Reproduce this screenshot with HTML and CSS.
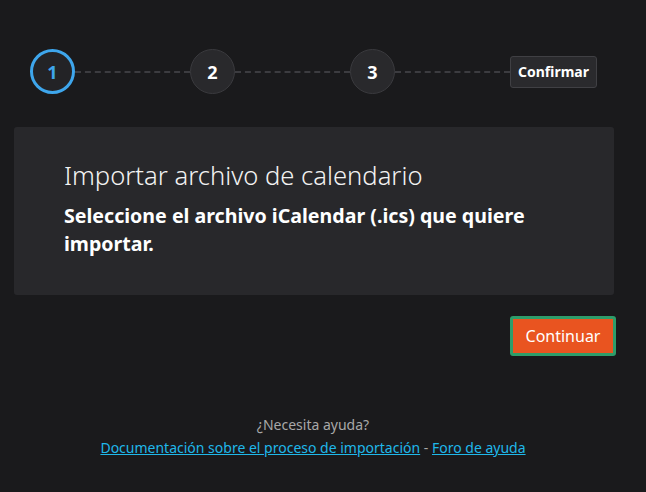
FILE: index.html
```html
<!DOCTYPE html>
<html lang="es">
<head>
<meta charset="utf-8">
<title>Importar calendario</title>
<link rel="stylesheet" href="styles.css">
</head>
<body>
<div class="page">
  <div class="stepper">
    <div class="step step-active">1</div>
    <div class="connector"></div>
    <div class="step">2</div>
    <div class="connector"></div>
    <div class="step">3</div>
    <div class="connector"></div>
    <div class="step-final">Confirmar</div>
  </div>

  <section class="card">
    <h1 class="card-title">Importar archivo de calendario</h1>
    <p class="card-text">Seleccione el archivo iCalendar (.ics) que quiere importar.</p>
  </section>

  <div class="actions">
    <button class="btn-primary" type="button">Continuar</button>
  </div>

  <footer class="help">
    <div class="help-q">¿Necesita ayuda?</div>
    <div class="help-links"><a href="#">Documentación sobre el proceso de importación</a> - <a href="#">Foro de ayuda</a></div>
  </footer>
</div>
</body>
</html>
```

FILE: styles.css
```css
html, body {
  margin: 0;
  padding: 0;
  background: #1a1a1c;
  color: #ffffff;
  font-family: "Noto Sans", "Open Sans", sans-serif;
}

.page {
  width: 646px;
  height: 492px;
  overflow: hidden;
}

.stepper {
  display: flex;
  align-items: center;
  width: 567px;
  margin: 49px 0 0 30px;
  height: 45px;
}

.step {
  box-sizing: border-box;
  width: 45px;
  height: 45px;
  flex: none;
  border-radius: 50%;
  background: #29292c;
  border: 1px solid #3a3a3e;
  display: flex;
  align-items: center;
  justify-content: center;
  font-weight: 700;
  font-size: 18px;
  color: #ffffff;
}

.step-active {
  border: 3px solid #3ea6ec;
  color: #3ea6ec;
  background: #232326;
}

.connector {
  flex: 1;
  height: 0;
  border-top: 2px dashed #3c3c40;
}

.step-final {
  box-sizing: border-box;
  flex: none;
  width: 87px;
  height: 32px;
  display: flex;
  align-items: center;
  justify-content: center;
  background: #2a2a2d;
  border: 1px solid #404044;
  border-radius: 3px;
  font-weight: 700;
  font-size: 14px;
  color: #ffffff;
}

.card {
  box-sizing: border-box;
  width: 600px;
  height: 168px;
  margin: 33px 0 0 14px;
  padding: 33px 50px 0 50px;
  background: #28282b;
  border-radius: 3px;
}

.card-title {
  margin: 0;
  font-weight: 300;
  font-size: 25.6px;
  line-height: 32px;
  color: #f2f2f2;
}

.card-text {
  margin: 10px 0 0 0;
  font-weight: 700;
  font-size: 19.6px;
  line-height: 28px;
  color: #ffffff;
}

.actions {
  display: flex;
  justify-content: flex-end;
  width: 616px;
  margin-top: 21px;
}

.btn-primary {
  box-sizing: border-box;
  width: 106px;
  height: 40px;
  background: #e95420;
  border: 3px solid #2e9d6a;
  border-radius: 3px;
  color: #ffffff;
  font-family: inherit;
  font-size: 16px;
  padding: 0;
}

.help {
  margin-top: 57px;
  text-align: center;
  width: 626px;
  font-size: 14px;
  line-height: 23px;
  color: #a8a8a8;
}

.help-links a {
  color: #1fb8ea;
  text-decoration: underline;
}
```
